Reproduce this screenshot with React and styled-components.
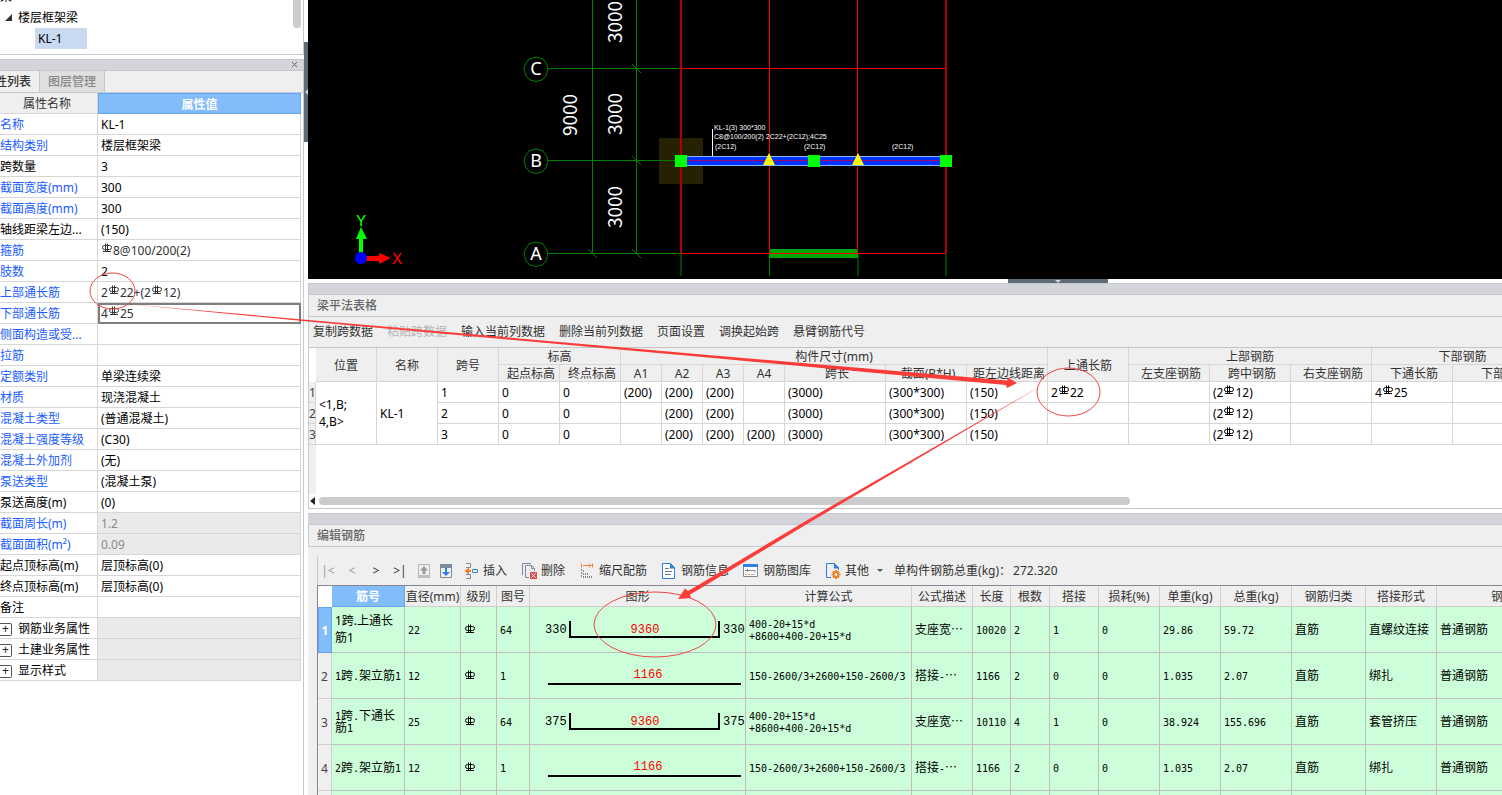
import React from "react";
import styled, { createGlobalStyle, css } from "styled-components";

const ui = `"Noto Sans", "Noto Sans CJK SC", sans-serif`;
const line = "#c5c8d0";
const grid = "#d6d6d6";
const face = "#efefef";

const GlobalStyle = createGlobalStyle`
  * { box-sizing: border-box; }
  body { margin: 0; background: #fff; color: #000; font: 12px/16px ${ui}; }
  button { margin: 0; padding: 0; border: 0; background: none; color: inherit; font: inherit; white-space: nowrap; cursor: pointer; }
  table { border-collapse: separate; border-spacing: 0; table-layout: fixed; }
  th { font-weight: 400; }
  svg { display: block; }
`;

const Page = styled.div`
  position: relative;
  display: flex;
  height: 100vh;
  overflow: hidden;
`;

/* ---------- left pane ---------- */

const LeftPane = styled.aside`
  flex: none;
  width: 304px;
  display: flex;
  flex-direction: column;
  gap: 4px;
`;

const TreePanel = styled.section`
  display: flex;
  justify-content: space-between;
  height: 55px;
  padding-right: 2px;
  border-right: 1px solid ${line};
  border-bottom: 1px solid ${line};
  overflow: hidden;
`;

const Tree = styled.ul`
  list-style: none;
  margin: -14px 0 0;
  padding: 0;
`;

const TreeItem = styled.li`
  display: flex;
  align-items: center;
  gap: 6px;
  height: 21px;
  padding-left: ${(p) => p.$indent}px;
`;

const TreeNode = styled.span`
  line-height: 21px;
  ${(p) => p.$selected && css`width: 52px; padding-left: 3px; background: #c9d9f0;`}
`;

const TreeThumb = styled.div`
  width: 8px;
  height: 28px;
  border-radius: 0 0 4px 4px;
  background: #cdcdcd;
`;

const PropertyPanel = styled.section`
  flex: 1;
  border-right: 1px solid ${line};
  border-top: 1px solid ${line};
`;

const Strip = styled.div`
  display: flex;
  flex: none;
  justify-content: flex-end;
  align-items: center;
  height: 11px;
  padding-right: 4px;
  background: #d4d5da;
  border-bottom: 1px solid ${line};
`;

const CloseButton = styled.button`
  width: 8px;
  height: 8px;
  color: #666;
`;

const TabBar = styled.div`
  display: flex;
  height: 22px;
  background: ${face};
  border-bottom: 1px solid ${line};
`;

const Tab = styled.button`
  display: flex;
  justify-content: flex-end;
  align-items: center;
  width: ${(p) => p.$width}px;
  padding-right: 8px;
  overflow: hidden;
  border-right: 1px solid ${line};
  font-weight: 500;
  color: ${(p) => (p.$active ? "#333" : "#888")};
  background: ${(p) => (p.$active ? face : "#dfdfdf")};
`;

const PropertyTable = styled.table`
  width: 301px;
`;

const PropHead = styled.th`
  height: 21px;
  padding: 2px 3px 0 0;
  border: 1px solid ${grid};
  border-width: 0 1px 1px 0;
  background: ${face};
  color: #333;
  ${(p) => p.$selected && css`padding-right: 0; background: #82bcfb; border: 1px solid #64a6f0; color: #fff; font-weight: 700;`}
`;

const PropName = styled.th`
  height: 21px;
  padding: 2px 0 0;
  border: 1px solid ${grid};
  border-width: 0 1px 1px 0;
  text-align: left;
  white-space: nowrap;
  overflow: hidden;
  color: ${(p) => (p.$link ? "#1a5cff" : "#000")};
`;

const PropValue = styled.td`
  height: 21px;
  padding: 2px 3px 0;
  border: 1px solid ${grid};
  border-width: 0 1px 1px 0;
  color: ${(p) => (p.$muted ? "#8a8a8a" : p.$rebar ? "#333" : "#000")};
  background: ${(p) => (p.$muted ? "#eaeaea" : "#fff")};
  ${(p) => p.$focus && css`outline: 2px solid #7f7f7f; outline-offset: -2px;`}
`;

const GroupToggle = styled.div`
  display: flex;
  align-items: center;
  gap: 6px;
`;

const ExpandButton = styled.button`
  width: 12px;
  height: 13px;
  border: 1px solid #555;
  border-left: 0;
  border-radius: 0 2px 2px 0;
  line-height: 10px;
  color: #222;
`;

/* ---------- splitters ---------- */

const SideSplitter = styled.div`
  flex: none;
  width: 4px;
  padding-top: 42px;
`;

const BottomSplitter = styled.div`
  flex: none;
  height: 4px;
  padding-left: 700px;
`;

const Handle = styled.button`
  display: flex;
  justify-content: center;
  align-items: center;
  width: ${(p) => (p.$vertical ? 4 : 100)}px;
  height: ${(p) => (p.$vertical ? 100 : 4)}px;
  background: #5f6b76;
`;

/* ---------- right side ---------- */

const Workspace = styled.main`
  flex: 1;
  min-width: 0;
  display: flex;
  flex-direction: column;
`;

const Drawing = styled.svg`
  flex: none;
  width: 100%;
  height: 279px;
  background: #000;
`;

const Dock = styled.section`
  display: flex;
  flex-direction: column;
  overflow: hidden;
  border-top: 1px solid ${line};
  ${(p) => (p.$grow
    ? css`flex: 1; background: ${face};`
    : css`flex: none; height: 226px; margin-bottom: 4px; border-left: 1px solid ${line}; border-bottom: 1px solid #c4c4c4;`)}
`;

const DockTitle = styled.h2`
  flex: none;
  height: 22px;
  margin: 0;
  padding-left: 8px;
  border-bottom: 1px solid ${line};
  ${(p) => p.$edge && css`border-left: 1px solid ${line};`}
  background: ${face};
  color: #666;
  font: 500 12px/22px ${ui};
`;

const SpanToolbar = styled.div`
  flex: none;
  display: flex;
  align-items: center;
  gap: 14px;
  height: 31px;
  padding: 0 4px;
  background: ${face};
  border-bottom: 1px solid #c4c4c4;
`;

const TextButton = styled.button`
  color: #333;
  &:disabled { color: #b4b4b4; }
`;

const SpanTable = styled.table`
  flex: none;
  width: 1245px;
`;

const SpanHead = styled.th`
  height: 17px;
  padding: 1px 0 0 ${(p) => (p.$sub ? 4 : 0)}px;
  border: 1px solid ${grid};
  border-width: 0 1px 1px 0;
  background: ${face};
  color: #333;
  line-height: 15px;
  white-space: nowrap;
  overflow: hidden;
`;

const Corner = styled.td`
  padding: 0;
  background: #fff;
`;

const SpanIndex = styled.th`
  height: 21px;
  padding: 2px 0 0;
  border: 1px solid ${grid};
  border-width: 0 1px 1px 0;
  background: ${face};
  color: #444;
  text-align: left;
`;

const SpanCell = styled.td`
  height: 21px;
  padding: 0 3px;
  border: 1px solid ${grid};
  border-width: 0 1px 1px 0;
  line-height: 17px;
  white-space: nowrap;
`;

const EmptyGrid = styled.div`
  flex: 1;
  border-left: 7px solid ${face};
`;

const ScrollRow = styled.div`
  flex: none;
  display: flex;
  align-items: center;
  gap: 4px;
  height: 14px;
  padding-left: 1px;
`;

const ScrollThumb = styled.div`
  width: 68%;
  height: 8px;
  border-radius: 4px;
  background: #cbcbcb;
`;

/* ---------- rebar editor ---------- */

const EditorFrame = styled.div`
  flex: 1;
  display: flex;
  flex-direction: column;
  margin: 9px 0 0 9px;
  overflow: hidden;
`;

const EditorToolbar = styled.div`
  flex: none;
  display: flex;
  align-items: center;
  height: 29px;
  border-left: 1px solid ${line};
  color: #333;
`;

const NavGroup = styled.div`
  display: flex;
  gap: 4px;
`;

const NavButton = styled.button`
  width: 20px;
  height: 20px;
  color: #333;
  &:disabled { color: #9a9a9a; }
`;

const StepGroup = styled.div`
  display: flex;
  gap: 6px;
  margin: 0 9px 0 6px;
`;

const ActionGroup = styled.div`
  display: flex;
  gap: 14px;
`;

const ActionButton = styled.button`
  display: flex;
  align-items: center;
  gap: 4px;
`;

const Caret = styled.span`
  margin-left: 4px;
  border: 3px solid transparent;
  border-top-color: #555;
  border-bottom: 0;
`;

const Total = styled.output`
  display: flex;
  gap: 2px;
  margin-left: 11px;
  white-space: pre;
`;

const RebarTable = styled.table`
  width: 1277px;
  border-left: 1px solid #85868f;
  border-top: 1px solid #85868f;
`;

const RebarHead = styled.th`
  height: 21px;
  padding: 2px 0 0;
  border: 1px solid #cfcfcf;
  border-width: 0 1px 1px 0;
  background: ${face};
  color: #333;
  white-space: nowrap;
  ${(p) => p.$selected && css`background: #82bcfb; border-color: #64a6f0; color: #fff; font-weight: 700;`}
`;

const RebarIndex = styled.th`
  height: 46px;
  padding: 2px 0 0;
  border: 1px solid #cfcfcf;
  border-width: 0 1px 1px 0;
  background: ${face};
  color: #444;
  ${(p) => p.$selected && css`background: #82bcfb; border: 1px solid #64a6f0; color: #fff; font-weight: 700;`}
`;

const RebarCell = styled.td`
  height: 46px;
  padding: ${(p) => (p.$flush ? "0" : "0 3px 2px")};
  border: 1px solid #bfbfbf;
  border-width: 0 1px 1px 0;
  background: #ccffd9;
  line-height: 12px;
  white-space: pre;
  font-family: "Noto Sans CJK SC", sans-serif;
`;

const Smooth = styled.span`
  font: 12px/17px ${ui};
`;

const Digits = styled.span`
  font: 10px/1px "DejaVu Sans Mono", monospace;
`;

const BarDrawing = styled.svg`
  font: 12px "Liberation Mono", monospace;
`;

const Overlay = styled.svg`
  position: absolute;
  inset: 0;
  width: 100%;
  height: 100%;
  pointer-events: none;
`;

const SymbolSvg = styled.svg`
  display: inline-block;
  margin: ${(p) => (p.$raised ? "-2px 1px 0" : "0 1px")};
  vertical-align: ${(p) => (p.$raised ? 2 : 0)}px;
`;

/* Steel grade mark: a ring crossed by two bars, on a base line */
const Grade = ({ raised }) => (
  <SymbolSvg $raised={raised} width="10" height="10" viewBox="0 0 10 10" fill="none" stroke="currentColor" role="img" aria-label="HRB400">
    <path d="M2.5 2.5H7.5Q9.5 2.5 9.5 4.5Q9.5 6.5 7.5 6.5H2.5Q.5 6.5 .5 4.5Q.5 2.5 2.5 2.5M1 8.5H9M3.5 .5V9M5.5 .5V9" />
  </SymbolSvg>
);

/* "#" in the data stands for the grade mark */
const Rebar = ({ text }) =>
  text.split("#").map((part, i) => (
    <React.Fragment key={i}>
      {i > 0 && <Grade raised />}
      {part}
    </React.Fragment>
  ));

const Narrow = ({ text }) =>
  text.split(/([\x20-\x7e]+)/).map((part, i) => (i % 2 ? <Digits key={i}>{part}</Digits> : part));

const properties = [
  ["名称", "KL-1", 1], ["结构类别", "楼层框架梁", 1], ["跨数量", "3"], ["截面宽度(mm)", "300", 1],
  ["截面高度(mm)", "300", 1], ["轴线距梁左边...", "(150)"], ["箍筋", "#8@100/200(2)", 1], ["肢数", "2", 1],
  ["上部通长筋", "2#22+(2#12)", 1], ["下部通长筋", "4#25", 1, "focus"], ["侧面构造或受...", "", 1], ["拉筋", "", 1],
  ["定额类别", "单梁连续梁", 1], ["材质", "现浇混凝土", 1], ["混凝土类型", "(普通混凝土)", 1],
  ["混凝土强度等级", "(C30)", 1], ["混凝土外加剂", "(无)", 1], ["泵送类型", "(混凝土泵)", 1], ["泵送高度(m)", "(0)"],
  ["截面周长(m)", "1.2", 1, "muted"], ["截面面积(m²)", "0.09", 1, "muted"], ["起点顶标高(m)", "层顶标高(0)"],
  ["终点顶标高(m)", "层顶标高(0)"], ["备注", ""], ["钢筋业务属性", "", 0, "group"], ["土建业务属性", "", 0, "group"],
  ["显示样式", "", 0, "group"],
];

const spanWidths = [7, 61, 61, 61, 61, 61, 41, 41, 41, 41, 101, 81, 81, 81, 81, 81, 81, 81, 101];
const spanSubHeads = ["起点标高", "终点标高", "A1", "A2", "A3", "A4", "跨长", "截面(B*H)", "距左边线距离", "左支座钢筋", "跨中钢筋", "右支座钢筋", "下通长筋", "下部钢筋"];
const spans = [
  ["1", "0", "0", "(200)", "(200)", "(200)", "", "(3000)", "(300*300)", "(150)", "2#22", "", "(2#12)", "", "4#25", ""],
  ["2", "0", "0", "", "(200)", "(200)", "", "(3000)", "(300*300)", "(150)", "", "", "(2#12)", "", "", ""],
  ["3", "0", "0", "", "(200)", "(200)", "(200)", "(3000)", "(300*300)", "(150)", "", "", "(2#12)", "", "", ""],
];

const rebarWidths = [14, 73, 56, 36, 33, 216, 166, 61, 38, 39, 49, 61, 61, 71, 74, 71, 157];
const rebarHeads = ["筋号", "直径(mm)", "级别", "图号", "图形", "计算公式", "公式描述", "长度", "根数", "搭接", "损耗(%)", "单重(kg)", "总重(kg)", "钢筋归类", "搭接形式", "钢筋类型"];
const longFormula = "400-20+15*d\n+8600+400-20+15*d";
const midFormula = "150-2600/3+2600+150-2600/3";
const rebars = [
  { name: "1跨.上通长\n筋1", size: "22", shape: "64", hook: "330", len: "9360", rest: [longFormula, "支座宽…", "10020", "2", "1", "0", "29.86", "59.72", "直筋", "直螺纹连接", "普通钢筋"] },
  { name: "1跨.架立筋1", size: "12", shape: "1", len: "1166", rest: [midFormula, "搭接-…", "1166", "2", "0", "0", "1.035", "2.07", "直筋", "绑扎", "普通钢筋"] },
  { name: "1跨.下通长\n筋1", size: "25", shape: "64", hook: "375", len: "9360", rest: [longFormula, "支座宽…", "10110", "4", "1", "0", "38.924", "155.696", "直筋", "套管挤压", "普通钢筋"] },
  { name: "2跨.架立筋1", size: "12", shape: "1", len: "1166", rest: [midFormula, "搭接-…", "1166", "2", "0", "0", "1.035", "2.07", "直筋", "绑扎", "普通钢筋"] },
];

const Icon = ({ children }) => (
  <svg width="16" height="16" viewBox="0 0 16 16" fill="none" aria-hidden="true">{children}</svg>
);

const icons = {
  up: <Icon><path d="M2.5 1.5h11v13h-11z" stroke="#b4b4b4" /><path d="M2 12h12v3H2z" fill="#bdbdbd" /><path d="M8 3l4 4.500H9.500V11h-3V7.500H4z" fill="#999" /></Icon>,
  down: <Icon><path d="M2.5 1.5h11v13h-11z" stroke="#7b8b99" /><path d="M2 1h12v4H2z" fill="#7b8b99" /><path d="M7 5h2v4h3l-4 4-4-4h3z" fill="#2d7fe0" /></Icon>,
  insert: <Icon><path d="M3 .5h4.500v4H3M3 11.500h4.500v4H3" stroke="#7b8b99" /><path d="M9.500 6.500h5v3h-5z" stroke="#3a86dd" /><path d="M1.500 8L6 4.500V7h2v2H6v2.500z" fill="#f47b20" /></Icon>,
  remove: <Icon><path d="M1.500 12V.5H10M8 14.500H4.500v-12h6l3 3V8M10.500 2.500v3h3" stroke="#7b8b99" /><path d="M9 9h7v7H9z" fill="#e05050" /><path d="M10.500 10.500l4 4m0-4l-4 4" stroke="#fff" /></Icon>,
  scale: <Icon><path d="M2.500 .5v4M13.500 .5v4M4 2.500h8M10 .5l2 2-2 2" stroke="#f08030" /><path d="M2.500 6v9M4.500 15V7M6.500 15V9M8.500 15v-5M10.500 15v-3M12.500 15v-2" stroke="#7b8b99" strokeDasharray="2 1" /></Icon>,
  info: <Icon><path d="M1.500 .5h8l4 4v11h-12z" stroke="#2d7fe0" fill="#fff" /><path d="M9 0v5.500h5z" fill="#2d7fe0" /><path d="M4 5.500h4M4 8.500h7M4 11.500h6" stroke="#6b7b88" /></Icon>,
  gallery: <Icon><path d="M.5 2.500h14v11h-14z" stroke="#7b8b99" fill="#fff" /><path d="M0 1h15v3H0z" fill="#2d7fe0" /><path d="M2 7.500h3M4.500 6v3M5 7.500h7v2" stroke="#7b8b99" /><path d="M2 11.500h10" stroke="#e09050" strokeDasharray="2 1" /></Icon>,
  other: <Icon><path d="M6 14.500H1.500V.5h8l4 4V7M9.500 .5v4h4" stroke="#2d7fe0" /><path d="M9 .5l5 5H9z" fill="#2d7fe0" /><circle cx="11" cy="11.500" r="2.500" stroke="#f08020" strokeWidth="2" /><path d="M11 7v1M11 15v1M6.500 11.500h1M14.500 11.500h1M8 8.500l1 1M13 13.500l1 1M14 8.500l-1 1M8 14.500l1-1" stroke="#f08020" strokeWidth="2" /></Icon>,
};

const BarShape = ({ hook, len }) => (
  <BarDrawing width="215" height="45">
    {hook ? (
      <>
        <path d="M40 14V30H189V14" fill="none" stroke="#000" strokeWidth="2" />
        <text x="15" y="26">{hook}</text>
        <text x="193" y="26">{hook}</text>
      </>
    ) : (
      <path d="M18 31H211" stroke="#000" strokeWidth="2" />
    )}
    <text x={hook ? 115 : 118} y={hook ? 26 : 25} textAnchor="middle" fill="#f00">{len}</text>
  </BarDrawing>
);

const axisLabels = [["C", 69], ["B", 161], ["A", 254]];
const dimensions = [["3000", 615, 22], ["3000", 615, 114], ["3000", 615, 207], ["9000", 570, 115]];

const Plan = () => (
  <Drawing aria-label="梁平面图">
    <g transform="translate(-308 0)">
      <path d="M659 138h44v46h-44z" fill="#262100" />
      <g fill="none" stroke="#008000">
        <path d="M592.500 0V253.500M636.500 0V253.500M548 68.500H681M548 160.500H681M548 253.500H681" />
        <path d="M632 64l9 9M632 156l9 9M632 249l9 9M588 249l9 9" />
        <path d="M681 254v22M769.500 254v22M858 254v22M946 254v22" />
      </g>
      <path d="M769 249h89v9h-89z" fill="#00a800" />
      <path d="M681 68h265v1H681zM681 253h265v1H681zM769 0h1v253h-1zM857 0h1v253h-1z" fill="#f00" />
      <path d="M680 0h2v253h-2zM945 0h2v253h-2z" fill="#b00000" />
      <path d="M681 156h265v10H681z" fill="#0033ff" />
      <path d="M681 156h265v1H681zM681 165h265v1H681z" fill="#86b4ff" />
      <path d="M681 160h265v1H681z" fill="#a80070" />
      <path d="M675 155h12v12h-12zM808 155h12v12h-12zM940 155h12v12h-12z" fill="#0f0" />
      <path d="M769 153l6 12h-12zM858 153l6 12h-12z" fill="#ff0" />
      <path d="M712 129h1v27h-1z" fill="#fff" />
      {axisLabels.map(([label, y]) => (
        <g key={label}>
          <path transform={`translate(536 ${y})`} d="M0-12L7-10L11-4L12 0L10 7L6 11L0 12.500L-6 11L-10 7L-12 0L-11-4L-7-10Z" fill="none" stroke="#008000" />
          <text x="536" y={y + 6} textAnchor="middle" fill="#fff" fontSize="18" fontFamily="Noto Sans, sans-serif">{label}</text>
        </g>
      ))}
      {dimensions.map(([label, x, y]) => (
        <text key={`${x}-${y}`} transform={`translate(${x + 7} ${y}) rotate(-90)`} textAnchor="middle" fill="#fff" fontSize="19" fontFamily="Noto Sans CJK SC, sans-serif">{label}</text>
      ))}
      <g fill="#fff" fontSize="7" fontFamily="Liberation Sans, sans-serif">
        <text x="714" y="130">KL-1(3) 300*300</text>
        <text x="714" y="139">C8@100/200(2) 2C22+(2C12);4C25</text>
        <text x="715" y="149">(2C12)</text>
        <text x="804" y="149">(2C12)</text>
        <text x="892" y="149">(2C12)</text>
      </g>
      <path d="M359 239v15h4v-15h4l-6-12-5 12z" fill="#0f0" />
      <path d="M364 256h15v-3l12 5-12 6v-3h-15z" fill="#f00" />
      <circle cx="361" cy="258" r="6" fill="#00f" />
      <g fontSize="17" fontFamily="Liberation Mono, monospace">
        <text x="361" y="226" textAnchor="middle" fill="#0f0">Y</text>
        <text x="397" y="264" textAnchor="middle" fill="#f00">X</text>
      </g>
    </g>
  </Drawing>
);

function PropertyRow({ row: [name, value, link, kind] }) {
  return (
    <tr>
      <PropName scope="row" $link={link}>
        {kind === "group" ? (
          <GroupToggle>
            <ExpandButton aria-label={`展开${name}`}>+</ExpandButton>
            {name}
          </GroupToggle>
        ) : name}
      </PropName>
      <PropValue $muted={kind === "muted" || kind === "group"} $focus={kind === "focus"} $rebar={value.includes("#")}>
        <Rebar text={value} />
      </PropValue>
    </tr>
  );
}

const Columns = ({ widths }) => (
  <colgroup>{widths.map((w, i) => <col key={i} width={w} />)}</colgroup>
);

export default function App() {
  return (
    <>
      <GlobalStyle />
      <Page>
        <LeftPane>
          <TreePanel>
            <Tree>
              <TreeItem $indent={0}><TreeNode>梁</TreeNode></TreeItem>
              <TreeItem $indent={5}>
                <svg width="7" height="7"><path d="M7 0V7H0z" fill="#333" /></svg>
                <TreeNode>楼层框架梁</TreeNode>
              </TreeItem>
              <TreeItem $indent={35}><TreeNode $selected>KL-1</TreeNode></TreeItem>
            </Tree>
            <TreeThumb />
          </TreePanel>
          <PropertyPanel>
            <Strip>
              <CloseButton aria-label="关闭">
                <svg width="8" height="8"><path d="M1 1l5 5M6 1L1 6" stroke="currentColor" /></svg>
              </CloseButton>
            </Strip>
            <TabBar>
              <Tab $active $width={40}>属性列表</Tab>
              <Tab $width={65}>图层管理</Tab>
            </TabBar>
            <PropertyTable>
              <Columns widths={[98, 203]} />
              <thead>
                <tr><PropHead>属性名称</PropHead><PropHead $selected>属性值</PropHead></tr>
              </thead>
              <tbody>
                {properties.map((row) => <PropertyRow key={row[0]} row={row} />)}
              </tbody>
            </PropertyTable>
          </PropertyPanel>
        </LeftPane>

        <SideSplitter>
          <Handle $vertical aria-label="折叠左侧面板">
            <svg width="3" height="6"><path d="M3 0V6L0 3z" fill="#ccd2d8" /></svg>
          </Handle>
        </SideSplitter>

        <Workspace>
          <Plan />
          <BottomSplitter>
            <Handle aria-label="折叠下方面板">
              <svg width="6" height="3"><path d="M0 0H6L3 3z" fill="#ccd2d8" /></svg>
            </Handle>
          </BottomSplitter>

          <Dock>
            <Strip />
            <DockTitle>梁平法表格</DockTitle>
            <SpanToolbar>
              <TextButton>复制跨数据</TextButton>
              <TextButton disabled>粘贴跨数据</TextButton>
              <TextButton>输入当前列数据</TextButton>
              <TextButton>删除当前列数据</TextButton>
              <TextButton>页面设置</TextButton>
              <TextButton>调换起始跨</TextButton>
              <TextButton>悬臂钢筋代号</TextButton>
            </SpanToolbar>
            <SpanTable>
              <Columns widths={spanWidths} />
              <thead>
                <tr>
                  <Corner rowSpan={2} />
                  <SpanHead rowSpan={2}>位置</SpanHead>
                  <SpanHead rowSpan={2}>名称</SpanHead>
                  <SpanHead rowSpan={2}>跨号</SpanHead>
                  <SpanHead colSpan={2}>标高</SpanHead>
                  <SpanHead colSpan={7}>构件尺寸(mm)</SpanHead>
                  <SpanHead rowSpan={2}>上通长筋</SpanHead>
                  <SpanHead colSpan={3}>上部钢筋</SpanHead>
                  <SpanHead colSpan={2}>下部钢筋</SpanHead>
                </tr>
                <tr>{spanSubHeads.map((h) => <SpanHead $sub={!/^A/.test(h)} key={h}>{h}</SpanHead>)}</tr>
              </thead>
              <tbody>
                {spans.map((row, i) => (
                  <tr key={i}>
                    <SpanIndex scope="row">{i + 1}</SpanIndex>
                    {i === 0 && (
                      <>
                        <SpanCell rowSpan={3}>&lt;1,B;<br />4,B&gt;</SpanCell>
                        <SpanCell rowSpan={3}>KL-1</SpanCell>
                      </>
                    )}
                    {row.map((v, j) => <SpanCell key={j}><Rebar text={v} /></SpanCell>)}
                  </tr>
                ))}
              </tbody>
            </SpanTable>
            <EmptyGrid />
            <ScrollRow>
              <svg width="5" height="8"><path d="M5 0V8L0 4z" fill="#222" /></svg>
              <ScrollThumb />
            </ScrollRow>
          </Dock>

          <Dock $grow>
            <Strip />
            <DockTitle $edge>编辑钢筋</DockTitle>
            <EditorFrame>
              <EditorToolbar>
                <NavGroup>
                  <NavButton disabled aria-label="首行">|&lt;</NavButton>
                  <NavButton disabled aria-label="上一行">&lt;</NavButton>
                  <NavButton aria-label="下一行">&gt;</NavButton>
                  <NavButton aria-label="末行">&gt;|</NavButton>
                </NavGroup>
                <StepGroup>
                  <button disabled aria-label="上移">{icons.up}</button>
                  <button aria-label="下移">{icons.down}</button>
                </StepGroup>
                <ActionGroup>
                  <ActionButton>{icons.insert}插入</ActionButton>
                  <ActionButton>{icons.remove}删除</ActionButton>
                  <ActionButton>{icons.scale}缩尺配筋</ActionButton>
                  <ActionButton>{icons.info}钢筋信息</ActionButton>
                  <ActionButton>{icons.gallery}钢筋图库</ActionButton>
                  <ActionButton>{icons.other}其他<Caret /></ActionButton>
                </ActionGroup>
                <Total><span>单构件钢筋总重(kg)：</span><span>272.320</span></Total>
              </EditorToolbar>
              <RebarTable>
                <Columns widths={rebarWidths} />
                <thead>
                  <tr>
                    <Corner />
                    {rebarHeads.map((h, i) => <RebarHead key={h} $selected={i === 0}>{h}</RebarHead>)}
                  </tr>
                </thead>
                <tbody>
                  {rebars.map((r, i) => (
                    <tr key={i}>
                      <RebarIndex scope="row" $selected={i === 0}>{i + 1}</RebarIndex>
                      <RebarCell>{i === 0 ? <Smooth>{r.name}</Smooth> : <Narrow text={r.name} />}</RebarCell>
                      <RebarCell><Narrow text={r.size} /></RebarCell>
                      <RebarCell><Grade /></RebarCell>
                      <RebarCell><Narrow text={r.shape} /></RebarCell>
                      <RebarCell $flush><BarShape hook={r.hook} len={r.len} /></RebarCell>
                      {r.rest.map((v, j) => (
                        <RebarCell key={j}>
                          {v.split("\n").map((part) => <div key={part}><Narrow text={part} /></div>)}
                        </RebarCell>
                      ))}
                    </tr>
                  ))}
                  <tr>
                    <RebarIndex scope="row">5</RebarIndex>
                    {rebarHeads.map((h) => <RebarCell key={h} />)}
                  </tr>
                </tbody>
              </RebarTable>
            </EditorFrame>
          </Dock>
        </Workspace>

        <Overlay aria-hidden="true">
          <g fill="none" stroke="#ef4545">
            <ellipse cx="112.500" cy="291" rx="22.500" ry="18" />
            <ellipse cx="1068.500" cy="392" rx="31.500" ry="24" />
            <ellipse cx="655" cy="624.500" rx="61" ry="32.500" />
          </g>
          <path d="M127 304L708 355L1007 380.500L1008 377.500L1017 383L1007 388L1006 385L708 357.500L308 321.500Z" fill="#fb3c38" />
          <path d="M1046 383L810 518.500L700 584L688 591L685 588.500L678 599L691 598L690 594.500L702 587.500L812 521Z" fill="#fb3c38" />
        </Overlay>
      </Page>
    </>
  );
}
